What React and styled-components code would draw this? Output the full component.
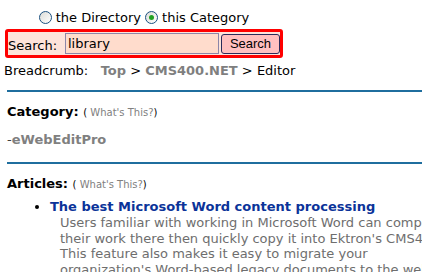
import React from "react";
import styled, { createGlobalStyle } from "styled-components";

const Global = createGlobalStyle`
  body {
    margin: 0;
    background: #ffffff;
    font-family: "DejaVu Sans", Verdana, sans-serif;
    font-size: 13px;
    color: #000;
  }
`;

const Page = styled.div`
  width: 422px;
  height: 272px;
  overflow: hidden;
  padding-top: 8px;
  box-sizing: border-box;
`;

const SearchArea = styled.div`
  width: 278px;
  margin-left: 5px;
`;

const RadioRow = styled.div`
  display: flex;
  justify-content: center;
  align-items: center;
  gap: 4px;
  height: 19px;
`;

const RadioLabel = styled.label`
  display: flex;
  align-items: center;
  gap: 4px;
`;

const Radio = styled.span`
  width: 11px;
  height: 11px;
  border-radius: 50%;
  border: 1px solid #1c5180;
  background: linear-gradient(135deg, #dcdcd7, #ffffff);
  display: flex;
  align-items: center;
  justify-content: center;
  &::after {
    content: "";
    display: ${(p) => (p.checked ? "block" : "none")};
    width: 5px;
    height: 5px;
    border-radius: 50%;
    background: #21a121;
  }
`;

const SearchBox = styled.form`
  display: flex;
  align-items: center;
  margin-top: 2px;
  border: 3px solid #ff0000;
  border-radius: 3px;
  background: #fde3da;
  height: 21px;
  padding: 1px 0;
`;

const SearchLabel = styled.span`
  margin-top: 4px;
  width: 57px;
`;

const Input = styled.input`
  width: 154px;
  height: 21px;
  box-sizing: border-box;
  border: 1px solid #8c86a8;
  background: #ffdccc;
  font-family: "DejaVu Sans", Verdana, sans-serif;
  font-size: 13px;
  padding: 0 2px;
  outline: none;
`;

const Button = styled.button`
  margin-left: 2px;
  width: 59px;
  height: 20px;
  box-sizing: border-box;
  border: 1px solid #2a2a5a;
  border-radius: 3px;
  background: #ffc0c0;
  font-family: "Liberation Sans", Arial, sans-serif;
  font-size: 13px;
  color: #000;
  padding: 0;
`;

const Breadcrumb = styled.div`
  margin: 5px 0 0 4px;
  height: 16px;
  line-height: 16px;
`;

const Crumb = styled.span`
  color: #7f7f7f;
  font-weight: bold;
`;

const Section = styled.div`
  margin-left: 7px;
  border-top: 2px solid #1f6e9e;
  padding-top: 11px;
  margin-top: ${(p) => p.$top || 0}px;
`;

const Heading = styled.div`
  font-weight: bold;
  font-size: 13px;
  height: 17px;
  line-height: 17px;
  span {
    font-weight: normal;
    font-size: 10px;
  }
  em {
    font-style: normal;
    color: #808080;
  }
`;

const SubCat = styled.div`
  margin-top: 11px;
  font-size: 13px;
  font-weight: bold;
  color: #808080;
  height: 17px;
  line-height: 17px;
  span {
    font-weight: normal;
    color: #404040;
  }
`;

const List = styled.ul`
  margin: 6px 0 0;
  padding-left: 43px;
  list-style: disc;
`;

const Title = styled.a`
  display: block;
  font-weight: bold;
  font-size: 13px;
  color: #0b3399;
  text-decoration: none;
  line-height: 17px;
`;

const Desc = styled.div`
  margin-left: 10px;
  color: #6e6e6e;
  line-height: 15.5px;
  white-space: nowrap;
`;

export default function App() {
  return (
    <>
      <Global />
      <Page>
        <SearchArea>
          <RadioRow>
            <RadioLabel>
              <Radio /> the Directory
            </RadioLabel>
            <RadioLabel>
              <Radio checked /> this Category
            </RadioLabel>
          </RadioRow>
          <SearchBox onSubmit={(e) => e.preventDefault()}>
            <SearchLabel>Search:</SearchLabel>
            <Input defaultValue="library" />
            <Button type="submit">Search</Button>
          </SearchBox>
        </SearchArea>
        <Breadcrumb>
          Breadcrumb:&nbsp;&nbsp; <Crumb>Top</Crumb> &gt; <Crumb>CMS400.NET</Crumb> &gt; Editor
        </Breadcrumb>
        <Section $top={11}>
          <Heading>
            Category: <span>( <em>What's This?</em>)</span>
          </Heading>
          <SubCat>
            <span>-</span>eWebEditPro
          </SubCat>
        </Section>
        <Section $top={14}>
          <Heading>
            Articles: <span>( <em>What's This?</em>)</span>
          </Heading>
          <List>
            <li>
              <Title href="#">The best Microsoft Word content processing</Title>
              <Desc>
                Users familiar with working in Microsoft Word can compose
                <br />
                their work there then quickly copy it into Ektron's CMS400.NET.
                <br />
                This feature also makes it easy to migrate your
                <br />
                organization's Word-based legacy documents to the web.
              </Desc>
            </li>
          </List>
        </Section>
      </Page>
    </>
  );
}
